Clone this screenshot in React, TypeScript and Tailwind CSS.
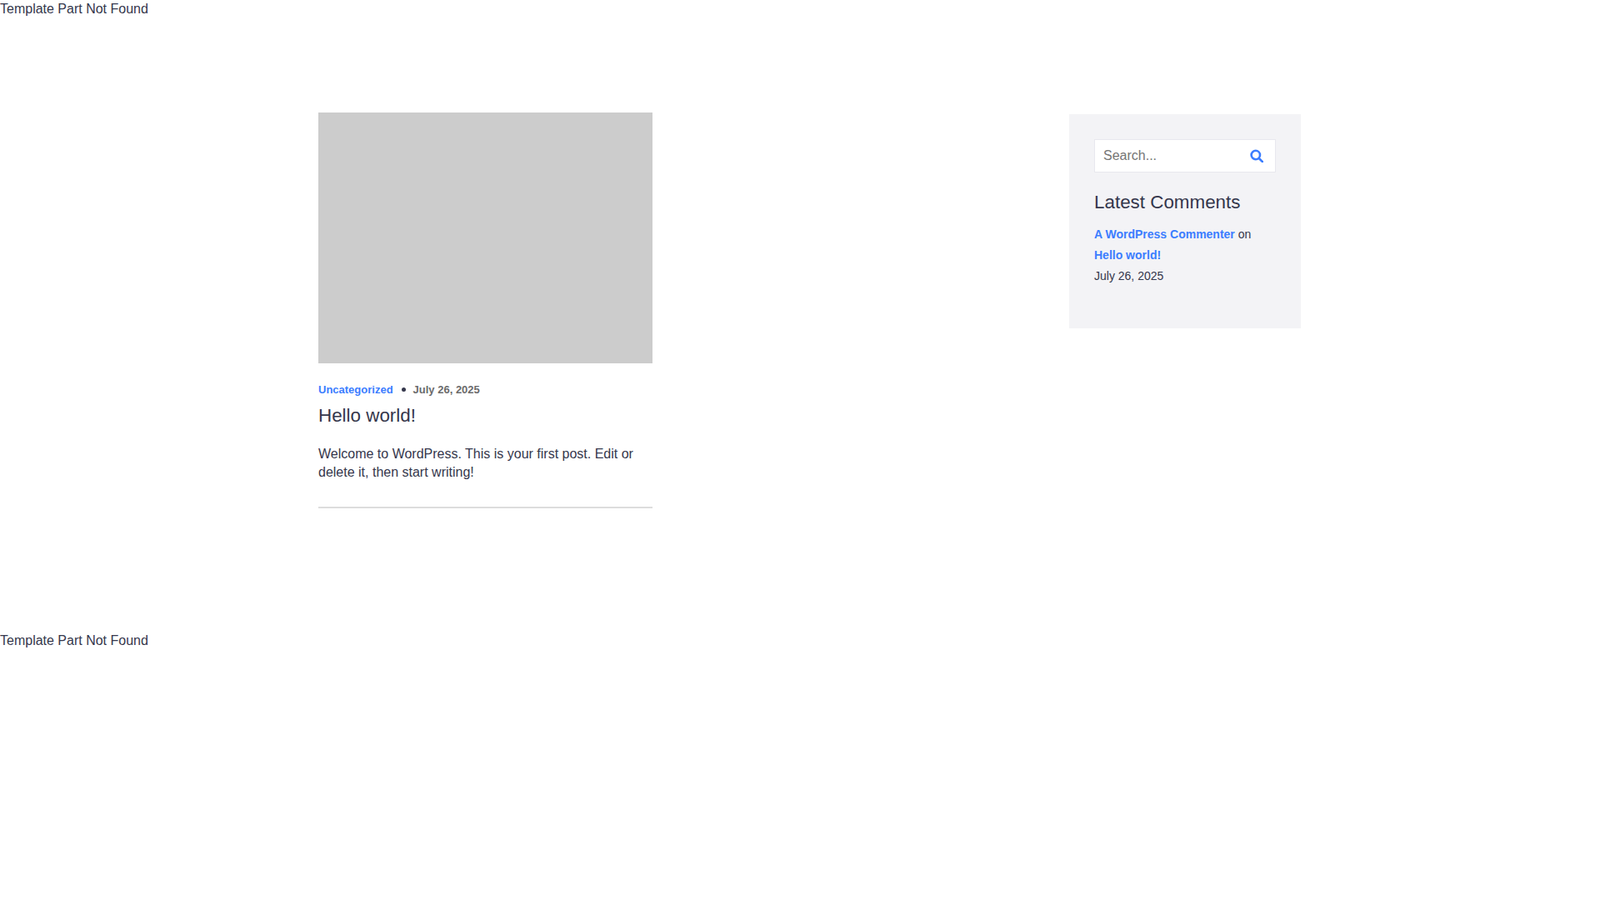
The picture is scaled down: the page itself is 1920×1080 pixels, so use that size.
export default function App() {
  return (
    <div className="min-h-screen bg-white text-[#35374c] text-base leading-[21px] font-['Liberation_Sans',Arial,sans-serif]">
      <div>Template Part Not Found</div>

      <main className="w-[1179px] ml-[382px] pt-[114px] pb-[148px] flex justify-between items-start">
        {/* Post */}
        <article className="w-[401px] pb-[30px] border-b-2 border-[#dddddd]">
          <div className="h-[301px] bg-[#cccccc]" />
          <div className="mt-[23px] flex items-center text-[13px] leading-[17px] font-bold">
            <a className="text-[#3b7dff]">Uncategorized</a>
            <span className="w-[5px] h-[5px] rounded-full bg-[#35374c] ml-[10px] mr-[9px]" />
            <span className="text-[#6b6b6b]">July 26, 2025</span>
          </div>
          <h2 className="mt-[8px] text-[22.4px] leading-[29px] font-normal">Hello world!</h2>
          <p className="mt-[21px] leading-[22px]">
            Welcome to WordPress. This is your first post. Edit or delete it, then start writing!
          </p>
        </article>

        {/* Sidebar */}
        <aside className="mt-[2px] w-[278px] h-[257px] bg-[#f3f3f6] p-[30px]">
          <div className="h-[40px] bg-white border border-[#e8e8ee] flex items-center justify-between pl-[10px] pr-[14px]">
            <input
              placeholder="Search..."
              className="min-w-0 flex-1 -mt-[2px] bg-transparent outline-none placeholder:text-[#757575]"
            />
            <svg viewBox="0 0 16 16" className="w-[16px] h-[16px] shrink-0 text-[#3b7dff]" fill="none" stroke="currentColor" strokeWidth="2.6">
              <circle cx="6.8" cy="7" r="5.2" />
              <path d="M10.8 11 L15 15.2" strokeLinecap="round" />
            </svg>
          </div>
          <h3 className="mt-[21px] text-[22.4px] leading-[29px] font-normal">Latest Comments</h3>
          <div className="mt-[12px] text-sm leading-[25px]">
            <div>
              <a className="font-bold text-[#3b7dff]">A WordPress Commenter</a> on
            </div>
            <div>
              <a className="font-bold text-[#3b7dff]">Hello world!</a>
            </div>
            <div>July 26, 2025</div>
          </div>
        </aside>
      </main>

      <div>Template Part Not Found</div>
    </div>
  );
}
